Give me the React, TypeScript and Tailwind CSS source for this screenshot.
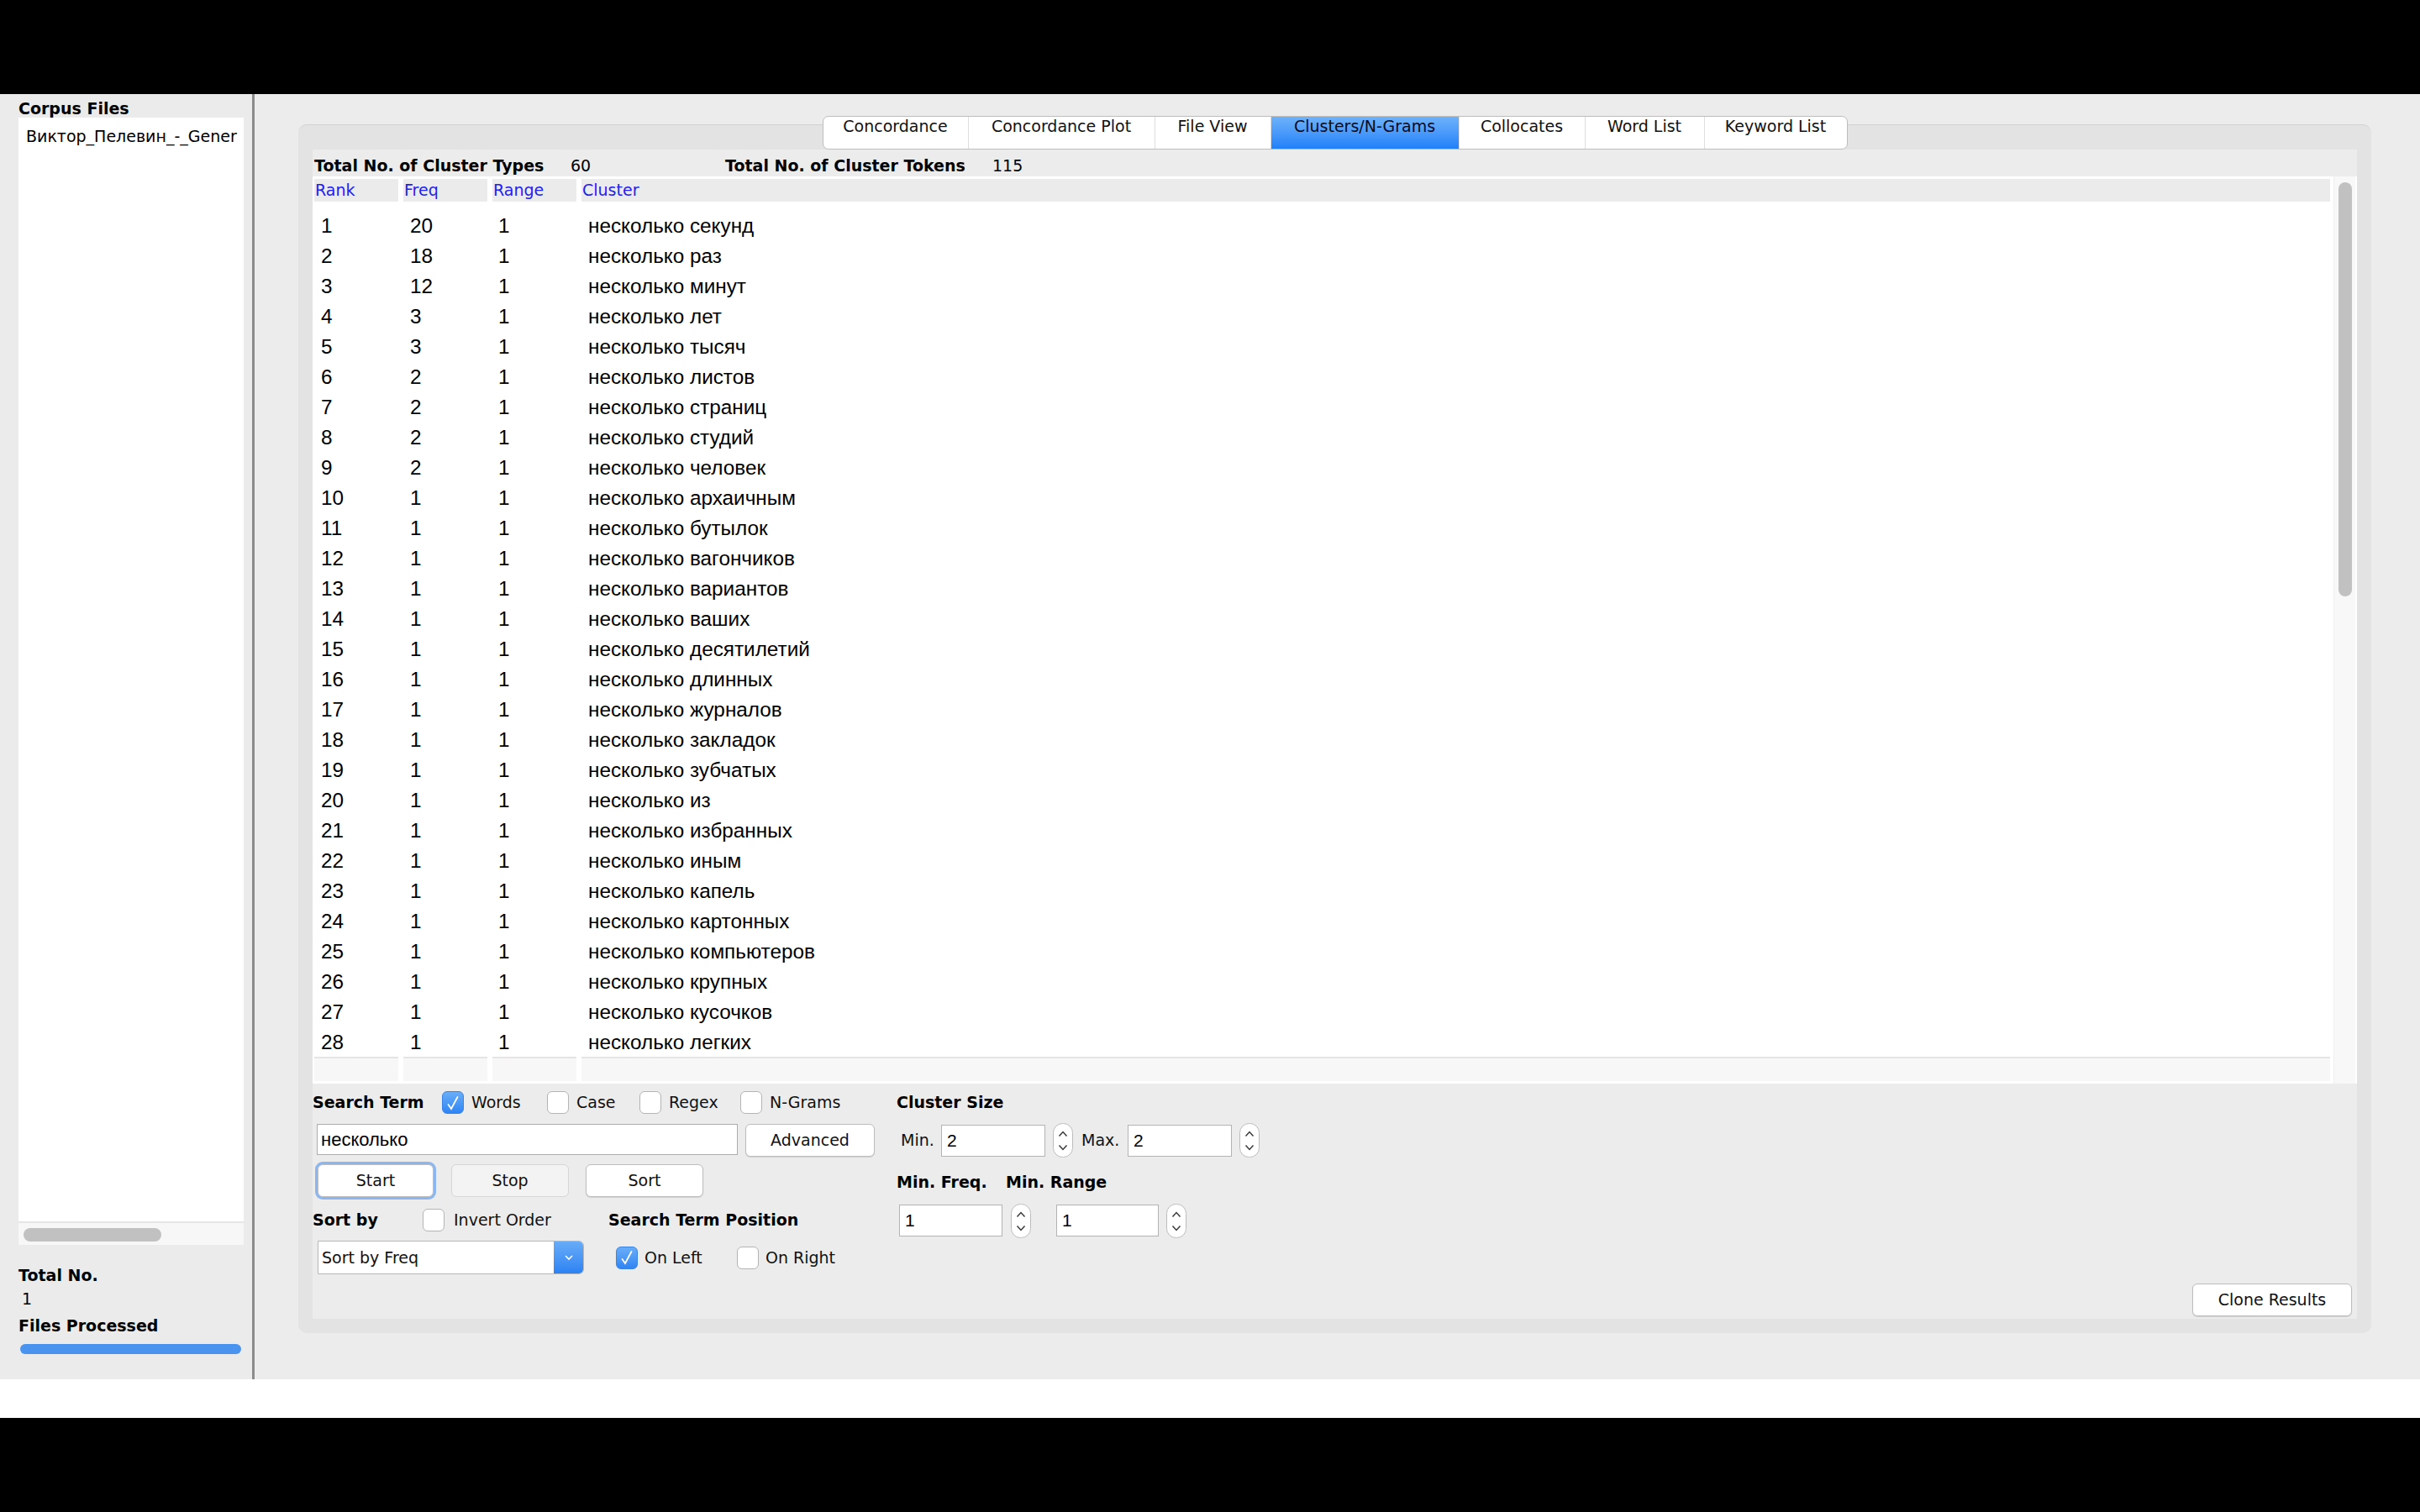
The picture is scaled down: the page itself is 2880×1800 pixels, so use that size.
import React from 'react';

const UI = "font-['DejaVu_Sans',sans-serif]";
const CELL = "font-['Liberation_Sans',Arial,sans-serif]";

const ROWS: [number, number, string][] = [
  [1, 20, 'несколько секунд'],
  [2, 18, 'несколько раз'],
  [3, 12, 'несколько минут'],
  [4, 3, 'несколько лет'],
  [5, 3, 'несколько тысяч'],
  [6, 2, 'несколько листов'],
  [7, 2, 'несколько страниц'],
  [8, 2, 'несколько студий'],
  [9, 2, 'несколько человек'],
  [10, 1, 'несколько архаичным'],
  [11, 1, 'несколько бутылок'],
  [12, 1, 'несколько вагончиков'],
  [13, 1, 'несколько вариантов'],
  [14, 1, 'несколько ваших'],
  [15, 1, 'несколько десятилетий'],
  [16, 1, 'несколько длинных'],
  [17, 1, 'несколько журналов'],
  [18, 1, 'несколько закладок'],
  [19, 1, 'несколько зубчатых'],
  [20, 1, 'несколько из'],
  [21, 1, 'несколько избранных'],
  [22, 1, 'несколько иным'],
  [23, 1, 'несколько капель'],
  [24, 1, 'несколько картонных'],
  [25, 1, 'несколько компьютеров'],
  [26, 1, 'несколько крупных'],
  [27, 1, 'несколько кусочков'],
  [28, 1, 'несколько легких'],
];

const TABS = [
  { label: 'Concordance', w: 'w-[172px]' },
  { label: 'Concordance Plot', w: 'w-[222px]' },
  { label: 'File View', w: 'w-[138px]' },
  { label: 'Clusters/N-Grams', w: 'w-[224px]', active: true },
  { label: 'Collocates', w: 'w-[150px]' },
  { label: 'Word List', w: 'w-[142px]' },
  { label: 'Keyword List', w: 'w-[170px]' },
];

function Check({ checked }: { checked?: boolean }) {
  if (checked) {
    return (
      <span className="w-[26px] h-[27px] shrink-0 rounded-[6px] bg-linear-to-b from-[#69adf8] to-[#2e85f4] border border-[#3b84e2] flex items-center justify-center">
        <svg width="16" height="20" viewBox="0 0 16 20">
          <path d="M2.5 12 L6 17 L13.5 3" stroke="white" strokeWidth="1.8" fill="none" strokeLinecap="round" />
        </svg>
      </span>
    );
  }
  return <span className="w-[26px] h-[27px] shrink-0 rounded-[6px] bg-white border border-[#b4b4b4]" />;
}

function Spinner() {
  return (
    <svg width="24" height="41" viewBox="0 0 24 41" className="shrink-0">
      <rect x="0.5" y="0.5" width="23" height="40" rx="11" fill="white" stroke="#bcbcbc" />
      <path d="M7.5 15.5 L12 10.5 L16.5 15.5" stroke="#3a3a3a" strokeWidth="1.5" fill="none" />
      <path d="M7.5 26.5 L12 31.5 L16.5 26.5" stroke="#3a3a3a" strokeWidth="1.5" fill="none" />
    </svg>
  );
}

function Field({ value, w }: { value: string; w: string }) {
  return (
    <div className={`${w} h-[38px] shrink-0 bg-white border border-[#b3b3b3] flex items-center pl-[6px] ${CELL} text-[21px] text-black`}>
      {value}
    </div>
  );
}

function Button({ label, w, focus, dim }: { label: string; w: string; focus?: boolean; dim?: boolean }) {
  return (
    <div
      className={`${w} h-[39px] shrink-0 rounded-[6px] border flex items-center justify-center ${UI} text-[19px] text-[#111] ${
        dim ? 'bg-[#f3f3f3] border-[#d6d6d6]' : 'bg-white border-[#bdbdbd] shadow-[0_1px_1px_rgba(0,0,0,0.12)]'
      } ${focus ? 'ring-[3px] ring-[#8bb6f0]' : ''}`}
    >
      {label}
    </div>
  );
}

function LeftPane() {
  return (
    <div className="w-[300px] shrink-0 bg-[#ebebeb] flex flex-col pl-[22px] pr-[10px]">
      <div className={`mt-[5px] h-[23px] leading-[24px] ${UI} font-bold text-[19px] text-black`}>Corpus Files</div>
      <div className="h-[1314px] bg-white pt-[8px] pl-[9px] pr-[2px]">
        <div className={`${UI} text-[19px] leading-[28px] text-black whitespace-nowrap`}>Виктор_Пелевин_-_Gener</div>
      </div>
      <div className="h-[28px] bg-[#f7f7f7] border-t-2 border-[#e6e6e6] pt-[6px] pl-[6px]">
        <div className="w-[164px] h-[16px] rounded-full bg-[#c1c1c1]" />
      </div>
      <div className={`mt-[24px] h-[24px] leading-[24px] ${UI} font-bold text-[19px] text-black`}>Total No.</div>
      <div className={`mt-[4px] h-[24px] leading-[24px] pl-[4px] ${UI} text-[19px] text-black`}>1</div>
      <div className={`mt-[8px] h-[24px] leading-[24px] ${UI} font-bold text-[19px] text-black`}>Files Processed</div>
      <div className="mt-[10px] ml-[2px] w-[263px] h-[12px] rounded-full bg-[#4a93ef]" />
    </div>
  );
}

function Table() {
  return (
    <div className="h-[1080px] shrink-0 flex bg-white pr-[2px]">
      <div className="flex-1 flex flex-col pt-[3px] px-[2px]">
        <div className={`grid grid-cols-[100px_100px_100px_1fr] gap-x-[6px] h-[27px] ${UI} text-[19px] text-[#2121f5]`}>
          {['Rank', 'Freq', 'Range', 'Cluster'].map((h) => (
            <div key={h} className="bg-[#ebebeb] pl-[1px] leading-[27px]">
              {h}
            </div>
          ))}
        </div>
        <div className={`h-[1018px] pt-[11px] ${CELL} text-[24.3px] text-black`}>
          {ROWS.map(([rank, freq, cluster]) => (
            <div key={rank} className="grid grid-cols-[100px_100px_100px_1fr] gap-x-[6px] h-[36px] items-center">
              <div className="pl-[8px]">{rank}</div>
              <div className="pl-[8px]">{freq}</div>
              <div className="pl-[7px]">{1}</div>
              <div className="pl-[8px]">{cluster}</div>
            </div>
          ))}
        </div>
        <div className="grid grid-cols-[100px_100px_100px_1fr] gap-x-[6px] h-[29px]">
          {[0, 1, 2, 3].map((i) => (
            <div key={i} className="bg-[#f7f7f7] border-t-2 border-[#e5e5e5]" />
          ))}
        </div>
      </div>
      <div className="w-[26px] ml-[2px] bg-[#f8f8f8] border-l border-[#efefef] pt-[7px] pl-[5px]">
        <div className="w-[16px] h-[493px] rounded-full bg-[#c1c1c1]" />
      </div>
    </div>
  );
}

function Controls() {
  const label = `${UI} text-[19px] text-[#111]`;
  const bold = `${UI} font-bold text-[19px] text-black`;
  return (
    <div className="flex-1 flex">
      {/* left column: search term, buttons, sort */}
      <div className="w-[695px] shrink-0 flex flex-col">
        <div className="mt-[9px] h-[27px] flex items-center">
          <span className={`w-[154px] ${bold}`}>Search Term</span>
          <div className="w-[125px] flex items-center">
            <Check checked />
            <span className={`ml-[9px] ${label}`}>Words</span>
          </div>
          <div className="w-[110px] flex items-center">
            <Check />
            <span className={`ml-[9px] ${label}`}>Case</span>
          </div>
          <div className="w-[120px] flex items-center">
            <Check />
            <span className={`ml-[9px] ${label}`}>Regex</span>
          </div>
          <div className="flex items-center">
            <Check />
            <span className={`ml-[9px] ${label}`}>N-Grams</span>
          </div>
        </div>
        <div className="mt-[12px] h-[41px] flex items-start">
          <div className="ml-[5px] w-[501px] h-[37px] bg-white border border-[#adadad] flex items-center pl-[4px]">
            <span className={`${CELL} text-[22px] text-black`}>несколько</span>
          </div>
          <div className="ml-[9px]">
            <Button label="Advanced" w="w-[154px]" />
          </div>
        </div>
        <div className="mt-[7px] h-[39px] flex items-center">
          <div className="ml-[6px]">
            <Button label="Start" w="w-[138px]" focus />
          </div>
          <div className="ml-[21px]">
            <Button label="Stop" w="w-[140px]" dim />
          </div>
          <div className="ml-[20px]">
            <Button label="Sort" w="w-[140px]" />
          </div>
        </div>
        <div className="mt-[14px] h-[27px] flex items-center">
          <span className={`w-[131px] ${bold}`}>Sort by</span>
          <div className="w-[221px] flex items-center">
            <Check />
            <span className={`ml-[11px] ${label}`}>Invert Order</span>
          </div>
          <span className={bold}>Search Term Position</span>
        </div>
        <div className="mt-[11px] h-[40px] flex items-center">
          <div className="ml-[6px] w-[317px] h-[40px] flex rounded-r-[6px] overflow-hidden border border-[#b8b8b8] bg-white">
            <div className={`flex-1 flex items-center pl-[4px] ${label}`}>Sort by Freq</div>
            <div className="w-[35px] bg-linear-to-b from-[#68acf8] to-[#2c82f3] flex items-center justify-center">
              <svg width="12" height="8" viewBox="0 0 12 8">
                <path d="M2 2 L6 6 L10 2" stroke="white" strokeWidth="1.6" fill="none" />
              </svg>
            </div>
          </div>
          <div className="ml-[38px] w-[144px] flex items-center">
            <Check checked />
            <span className={`ml-[8px] ${label}`}>On Left</span>
          </div>
          <div className="flex items-center">
            <Check />
            <span className={`ml-[8px] ${label}`}>On Right</span>
          </div>
        </div>
      </div>

      {/* cluster size / min freq / min range */}
      <div className="w-[460px] shrink-0 flex flex-col">
        <div className="mt-[9px] h-[27px] flex items-center">
          <span className={bold}>Cluster Size</span>
        </div>
        <div className="mt-[11px] h-[41px] flex items-center">
          <span className={`ml-[5px] w-[48px] ${label}`}>Min.</span>
          <Field value="2" w="w-[124px]" />
          <div className="ml-[9px]">
            <Spinner />
          </div>
          <span className={`ml-[10px] w-[55px] ${label}`}>Max.</span>
          <Field value="2" w="w-[124px]" />
          <div className="ml-[9px]">
            <Spinner />
          </div>
        </div>
        <div className="mt-[16px] h-[27px] flex items-center">
          <span className={`w-[130px] ${bold}`}>Min. Freq.</span>
          <span className={bold}>Min. Range</span>
        </div>
        <div className="mt-[11px] h-[42px] flex items-center">
          <div className="ml-[3px]">
            <Field value="1" w="w-[123px]" />
          </div>
          <div className="ml-[10px]">
            <Spinner />
          </div>
          <div className="ml-[30px]">
            <Field value="1" w="w-[122px]" />
          </div>
          <div className="ml-[9px]">
            <Spinner />
          </div>
        </div>
      </div>

      <div className="flex-1 flex items-end justify-end pr-[6px] pb-[3px]">
        <Button label="Clone Results" w="w-[190px]" />
      </div>
    </div>
  );
}

function MainPane() {
  return (
    <div className="flex-1 flex flex-col pl-[52px] pr-[58px] pt-[26px] pb-[55px]">
      <div className="flex-1 flex flex-col mt-[10px] rounded-[10px] bg-[#e3e3e3] border-t border-[#d2d2d2] px-[17px] pb-[17px]">
        <div className="-mt-[11px] h-[40px] shrink-0 flex justify-center">
          <div className="flex h-[40px] bg-white border border-[#bdbdbd] rounded-[7px] overflow-hidden">
            {TABS.map((t, i) => (
              <div
                key={t.label}
                className={`${t.w} h-full flex justify-center leading-[22px] ${UI} text-[19px] ${
                  i > 0 ? 'border-l border-[#dedede]' : ''
                } ${t.active ? 'bg-linear-to-b from-[#6db2fa] to-[#1f80f9] text-[#0b0b20]' : 'text-[#111]'}`}
              >
                {t.label}
              </div>
            ))}
          </div>
        </div>
        <div className="flex-1 bg-[#ececec] flex flex-col">
          <div className={`h-[32px] shrink-0 flex pt-[8px] pl-[2px] leading-[22px] text-[19px] ${UI} text-black`}>
            <span className="w-[305px] font-bold">Total No. of Cluster Types</span>
            <span className="w-[184px]">60</span>
            <span className="w-[318px] font-bold">Total No. of Cluster Tokens</span>
            <span>115</span>
          </div>
          <Table />
          <Controls />
        </div>
      </div>
    </div>
  );
}

export default function App() {
  return (
    <div className="w-[2880px] h-[1800px] bg-black flex flex-col overflow-hidden">
      <div className="h-[112px] shrink-0" />
      <div className="h-[1530px] shrink-0 flex bg-[#ececec]">
        <LeftPane />
        <div className="w-[3px] shrink-0 bg-[#8c8c8c]" />
        <MainPane />
      </div>
      <div className="h-[46px] shrink-0 bg-white" />
    </div>
  );
}
